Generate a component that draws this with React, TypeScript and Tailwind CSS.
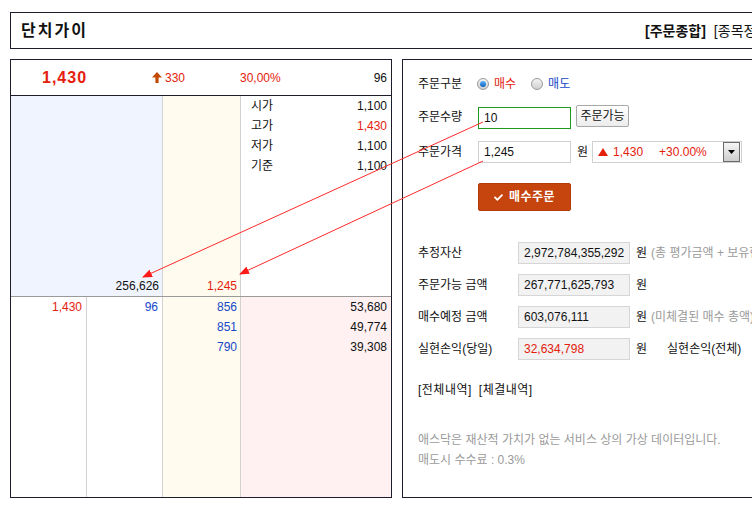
import React from 'react';
import { FaCheck } from 'react-icons/fa';

const RED = 'text-[#e4200c]';
const BLUE = 'text-[#1548c8]';

const infoRows = [
  { label: '시가', value: '1,100', red: false },
  { label: '고가', value: '1,430', red: true },
  { label: '저가', value: '1,100', red: false },
  { label: '기준', value: '1,100', red: false },
];

const assetRows = [
  { label: '추정자산', value: '2,972,784,355,292', note: '(총 평가금액 + 보유현금)' },
  { label: '주문가능 금액', value: '267,771,625,793', note: '' },
  { label: '매수예정 금액', value: '603,076,111', note: '(미체결된 매수 총액)' },
];

function Radio({ checked }: { checked: boolean }) {
  return (
    <span className="w-[12px] h-[12px] rounded-full border border-[#9a9a9a] bg-gradient-to-b from-[#f4f4f4] to-[#cfcfcf] flex items-center justify-center shrink-0">
      {checked && <span className="w-[6px] h-[6px] rounded-full bg-gradient-to-b from-[#5ab4ff] to-[#0a5fb8]" />}
    </span>
  );
}

function Arrows() {
  return (
    <svg className="absolute inset-0 pointer-events-none" width="752" height="508">
      <defs>
        <marker id="ah" markerWidth="10" markerHeight="8" refX="9" refY="4" orient="auto" markerUnits="userSpaceOnUse">
          <polygon points="0,0 10,4 0,8" fill="#ff1a1a" />
        </marker>
      </defs>
      <line x1="483" y1="122" x2="143" y2="277" stroke="#ff2a2a" strokeWidth="1" markerEnd="url(#ah)" />
      <line x1="483" y1="161" x2="240" y2="274" stroke="#ff2a2a" strokeWidth="1" markerEnd="url(#ah)" />
    </svg>
  );
}

export default function App() {
  return (
    <div className="relative w-[752px] h-[508px] overflow-hidden bg-white text-[12px] text-[#111] font-['Liberation_Sans','Noto_Sans_CJK_KR',sans-serif] leading-none">
      {/* header */}
      <div className="mt-[12px] ml-[10px] w-[800px] h-[37px] border border-[#1c1c2a] flex items-center pl-[10px]">
        <div className="w-[624px] shrink-0 text-[16px] font-bold tracking-[2px]">단치가이</div>
        <span className="text-[14px] font-bold shrink-0">[주문종합]</span>
        <span className="text-[14px] ml-[8px] shrink-0">[종목정보]</span>
      </div>

      <div className="flex ml-[10px] mt-[10px] gap-[10px] w-[800px]">
        {/* left: quote board */}
        <div className="w-[382px] h-[439px] shrink-0 border border-[#1c1c2a] flex flex-col">
          <div className="h-[36px] border-b border-[#1c1c2a] flex items-center shrink-0">
            <span className={`w-[141px] pl-[31px] text-[16px] font-bold tracking-[1px] ${RED}`}>1,430</span>
            <div className="w-[88px] flex items-center">
              <svg width="10" height="11" viewBox="0 0 10 11"><polygon points="5,0 10,5.5 6.6,5.5 6.6,11 3.4,11 3.4,5.5 0,5.5" fill="#c24a06" /></svg>
              <span className={`ml-[3px] ${RED}`}>330</span>
            </div>
            <span className={RED}>30,00%</span>
            <span className="flex-1 text-right pr-[4px]">96</span>
          </div>

          <div className="h-[201px] border-b border-[#9a9a9a] grid grid-cols-[152px_78px_1fr] shrink-0">
            <div className="bg-[#eff4ff] border-r border-[#d2d2d2] flex flex-col justify-end">
              <div className="h-[20px] flex items-center justify-end pr-[3px]">256,626</div>
            </div>
            <div className="bg-[#fffbef] border-r border-[#d2d2d2] flex flex-col justify-end">
              <div className={`h-[20px] flex items-center justify-end pr-[3px] ${RED}`}>1,245</div>
            </div>
            <div className="flex flex-col">
              {infoRows.map(r => (
                <div key={r.label} className="h-[20px] flex items-center justify-between pl-[10px] pr-[4px]">
                  <span>{r.label}</span>
                  <span className={r.red ? RED : ''}>{r.value}</span>
                </div>
              ))}
            </div>
          </div>

          <div className="flex-1 grid grid-cols-[76px_76px_78px_1fr]">
            <div className="border-r border-[#d2d2d2]">
              <div className={`h-[20px] flex items-center justify-end pr-[4px] ${RED}`}>1,430</div>
            </div>
            <div className="border-r border-[#d2d2d2]">
              <div className={`h-[20px] flex items-center justify-end pr-[4px] ${BLUE}`}>96</div>
            </div>
            <div className="bg-[#fffbef] border-r border-[#d2d2d2]">
              {['856', '851', '790'].map(v => (
                <div key={v} className={`h-[20px] flex items-center justify-end pr-[3px] ${BLUE}`}>{v}</div>
              ))}
            </div>
            <div className="bg-[#fff1f1]">
              {['53,680', '49,774', '39,308'].map(v => (
                <div key={v} className="h-[20px] flex items-center justify-end pr-[4px]">{v}</div>
              ))}
            </div>
          </div>
        </div>

        {/* right: order form */}
        <div className="w-[400px] h-[439px] shrink-0 border border-[#1c1c2a] flex flex-col pl-[15px] whitespace-nowrap">
          <div className="mt-[15px] h-[18px] flex items-center">
            <span className="w-[59px]">주문구분</span>
            <Radio checked />
            <span className={`ml-[5px] ${RED}`}>매수</span>
            <span className="ml-[15px]"><Radio checked={false} /></span>
            <span className={`ml-[5px] ${BLUE}`}>매도</span>
          </div>

          <div className="mt-[12px] h-[24px] flex items-start">
            <span className="w-[60px] self-center">주문수량</span>
            <div className="mt-[2px] w-[93px] h-[22px] border border-[#1f9a1f] flex items-center pl-[5px]">10</div>
            <button className="ml-[5px] w-[53px] h-[22px] border border-[#a8a8a8] rounded-[2px] bg-gradient-to-b from-white to-[#ececec] text-[12px]">주문가능</button>
          </div>

          <div className="mt-[12px] h-[22px] flex items-center">
            <span className="w-[60px]">주문가격</span>
            <div className="w-[93px] h-[22px] border border-[#d0d0d0] flex items-center pl-[5px]">1,245</div>
            <span className="ml-[6px]">원</span>
            <div className="ml-[4px] w-[150px] h-[22px] border border-[#d0d0d0] flex items-center pl-[5px] pr-px">
              <svg width="10" height="8" viewBox="0 0 10 8"><polygon points="5,0 10,8 0,8" fill="#e4200c" /></svg>
              <span className={`ml-[5px] w-[46px] ${RED}`}>1,430</span>
              <span className={RED}>+30.00%</span>
              <span className="ml-auto w-[17px] h-[20px] border border-[#6a6a6a] bg-gradient-to-b from-[#f6f6f6] to-[#cdcdcd] flex items-center justify-center">
                <svg width="7" height="4" viewBox="0 0 7 4"><polygon points="0,0 7,0 3.5,4" fill="#000" /></svg>
              </span>
            </div>
          </div>

          <div className="mt-[20px] ml-[60px]">
            <button className="w-[93px] h-[28px] rounded-[2px] bg-[#c6450f] border border-[#b33c0a] flex items-center justify-center gap-[6px] text-white font-bold text-[12px] tracking-[0.5px]">
              <FaCheck className="w-[9px] h-[9px]" />
              매수주문
            </button>
          </div>

          <div className="mt-[31px] flex flex-col gap-[10px]">
            {assetRows.map(r => (
              <div key={r.label} className="h-[22px] flex items-center">
                <span className="w-[100px]">{r.label}</span>
                <div className="w-[112px] h-[22px] bg-[#f2f2f2] border border-[#d6d6d6] flex items-center pl-[5px]">{r.value}</div>
                <span className="ml-[6px]">원</span>
                {r.note && <span className="ml-[4px] text-[#9a9a9a]">{r.note}</span>}
              </div>
            ))}
            <div className="h-[22px] flex items-center">
              <span className="w-[100px]">실현손익(당일)</span>
              <div className={`w-[112px] h-[22px] bg-[#f2f2f2] border border-[#d6d6d6] flex items-center pl-[5px] ${RED}`}>32,634,798</div>
              <span className="ml-[6px]">원</span>
              <span className="ml-[20px]">실현손익(전체)</span>
            </div>
          </div>

          <div className="mt-[21px] h-[18px] flex items-center gap-[7px]">
            <span className="tracking-[0.5px]">[전체내역]</span>
            <span className="tracking-[0.5px]">[체결내역]</span>
          </div>

          <div className="mt-[31px] text-[#9a9a9a] leading-[20px]">
            <div>애스닥은 재산적 가치가 없는 서비스 상의 가상 데이터입니다.</div>
            <div>매도시 수수료 : 0.3%</div>
          </div>
        </div>
      </div>

      <Arrows />
    </div>
  );
}
